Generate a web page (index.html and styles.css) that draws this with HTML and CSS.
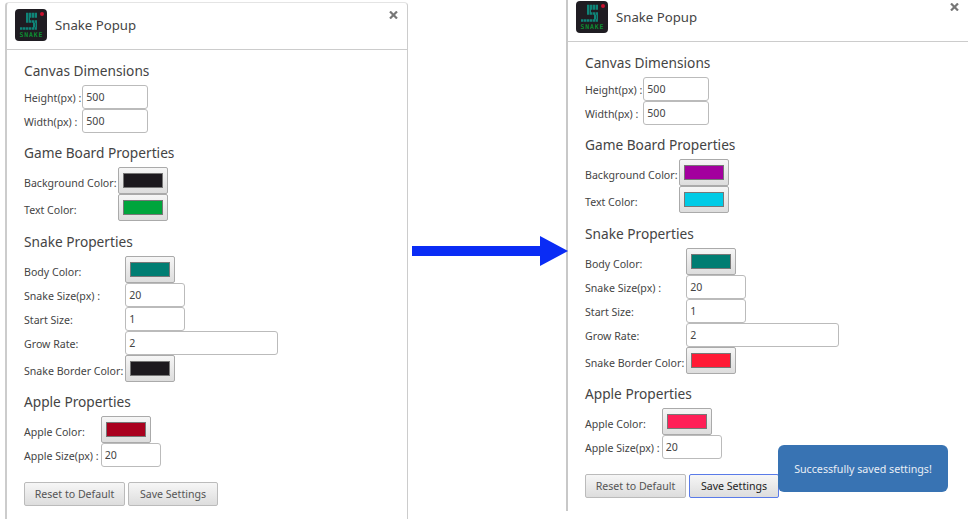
FILE: index.html
```html
<!DOCTYPE html>
<html lang="en">
<head>
    <meta charset="UTF-8">
    <meta name="viewport" content="width=device-width, initial-scale=1.0">
    <title>Snake Popup</title>
    <link rel="stylesheet" href="styles.css">
</head>
<body>
    <div class="panel panel-before">
        <div class="panel-header">
            <svg class="logo" width="32" height="32" viewBox="0 0 32 32">
                <rect width="32" height="32" rx="4" fill="#1f1c22"/>
                <path d="M11 5h11M11 7.500h11M11 10h4M11 12.500h11M18 15h4M18 17h4M5 19.500h17" stroke="#0f8478" stroke-width="2.500" stroke-dasharray="2.400 .5" fill="none"/>
                <circle cx="27" cy="5" r="2" fill="#c8102e"/>
                <text x="16" y="28" text-anchor="middle" textLength="23" class="logo-text">SNAKE</text>
            </svg>
            <span class="panel-title">Snake Popup</span>
            <svg class="close" width="9" height="8" viewBox="0 0 9 8"><path d="M1 .5l7 7M8 .5l-7 7" stroke="#777" stroke-width="2.200"/></svg>
        </div>
        <div class="panel-body">
            <h3>Canvas Dimensions</h3>
            <div class="fields">
                <label>Height(px) :</label><input class="num" value="500">
                <label>Width(px) :</label><input class="num" value="500">
            </div>
            <h3>Game Board Properties</h3>
            <div class="fields">
                <label>Background Color:</label><button class="swatch"><span style="background:#1c191e"></span></button>
                <label>Text Color:</label><button class="swatch"><span style="background:#00a53c"></span></button>
            </div>
            <h3 class="snake-title">Snake Properties</h3>
            <div class="fields">
                <label>Body Color:</label><button class="swatch"><span style="background:#007d72"></span></button>
                <label>Snake Size(px) :</label><input class="small" value="20">
                <label>Start Size:</label><input class="small" value="1">
                <label>Grow Rate:</label><input class="wide" value="2">
                <label>Snake Border Color:</label><button class="swatch"><span style="background:#1c191e"></span></button>
            </div>
            <h3>Apple Properties</h3>
            <div class="fields">
                <label>Apple Color:</label><button class="swatch"><span style="background:#a9001e"></span></button>
                <label>Apple Size(px) :</label><input class="small" value="20">
            </div>
            <div class="actions">
                <button class="btn btn-reset">Reset to Default</button>
                <button class="btn btn-save">Save Settings</button>
            </div>
        </div>
    </div>

    <div class="gutter">
        <svg class="arrow" width="156" height="30" viewBox="0 0 156 30">
            <path d="M0 10h128V0l28 15-28 15V20H0z" fill="#0a2cf5"/>
        </svg>
    </div>

    <div class="panel panel-after">
        <div class="panel-header">
            <svg class="logo" width="32" height="32" viewBox="0 0 32 32">
                <rect width="32" height="32" rx="4" fill="#1f1c22"/>
                <path d="M11 5h11M11 7.500h11M11 10h4M11 12.500h11M18 15h4M18 17h4M5 19.500h17" stroke="#0f8478" stroke-width="2.500" stroke-dasharray="2.400 .5" fill="none"/>
                <circle cx="27" cy="5" r="2" fill="#c8102e"/>
                <text x="16" y="28" text-anchor="middle" textLength="23" class="logo-text">SNAKE</text>
            </svg>
            <span class="panel-title">Snake Popup</span>
            <svg class="close" width="9" height="8" viewBox="0 0 9 8"><path d="M1 .5l7 7M8 .5l-7 7" stroke="#777" stroke-width="2.200"/></svg>
        </div>
        <div class="panel-body">
            <h3>Canvas Dimensions</h3>
            <div class="fields">
                <label>Height(px) :</label><input class="num" value="500">
                <label>Width(px) :</label><input class="num" value="500">
            </div>
            <h3>Game Board Properties</h3>
            <div class="fields">
                <label>Background Color:</label><button class="swatch"><span style="background:#a3009e"></span></button>
                <label>Text Color:</label><button class="swatch"><span style="background:#00cbe6"></span></button>
            </div>
            <h3 class="snake-title">Snake Properties</h3>
            <div class="fields">
                <label>Body Color:</label><button class="swatch"><span style="background:#007d72"></span></button>
                <label>Snake Size(px) :</label><input class="small" value="20">
                <label>Start Size:</label><input class="small" value="1">
                <label>Grow Rate:</label><input class="wide" value="2">
                <label>Snake Border Color:</label><button class="swatch"><span style="background:#ff1a35"></span></button>
            </div>
            <h3>Apple Properties</h3>
            <div class="fields">
                <label>Apple Color:</label><button class="swatch"><span style="background:#ff1f57"></span></button>
                <label>Apple Size(px) :</label><input class="small" value="20">
            </div>
            <div class="actions">
                <button class="btn btn-reset">Reset to Default</button>
                <button class="btn btn-save btn-focus">Save Settings</button>
            </div>
        </div>
        <div class="toast">Successfully saved settings!</div>
    </div>
</body>
</html>
```

FILE: styles.css
```css
html, body {
    height: 100%;
}

body {
    margin: 0;
    display: flex;
    align-items: flex-start;
    overflow: hidden;
    background: #fff;
    color: #444;
    font-family: "Noto Sans", "Open Sans", sans-serif;
    font-size: 10.6px;
}

.logo {
    flex: none;
}

.logo-text {
    font-family: "DejaVu Sans Mono", monospace;
    font-size: 6.5px;
    font-weight: bold;
    fill: #0c8f32;
}

.panel {
    position: relative;
    flex: none;
    width: 400px;
    background: #fff;
}

.panel-before {
    margin: 2px 0 0 5px;
    height: 516px;
    border-left: 2px solid #ccc;
    border-right: 1px solid #ccc;
    border-top: 1px solid #e4e4e4;
    border-radius: 4px 4px 0 0;
}

.panel-after {
    margin-top: -5px;
    height: 516px;
    border-left: 2px solid #c8c8c8;
}

.panel-header {
    box-sizing: border-box;
    display: flex;
    align-items: center;
    gap: 8px;
    height: 47px;
    padding: 0 0 2px 8px;
    border-bottom: 1px solid #ccc;
}

.panel-title {
    font-size: 13.2px;
}

.close {
    position: absolute;
    top: 8px;
    right: 9px;
}

.panel-body {
    padding: 12px 17px;
}

h3 {
    margin: 0;
    height: 23px;
    font-size: 13.7px;
    font-weight: 400;
    line-height: 18px;
}

h3:not(:first-child) {
    margin-top: 11px;
}

h3.snake-title {
    margin-top: 12px;
}

.fields {
    display: grid;
    grid-template-columns: max-content 1fr;
    align-items: center;
    column-gap: 2px;
}

.fields label {
    padding-top: 2px;
}

.fields label:has(+ .swatch) {
    padding-top: 4px;
}

input {
    box-sizing: border-box;
    height: 24px;
    padding: 0 3px;
    border: 1px solid #bbb;
    border-radius: 3px;
    font: 10.6px "Noto Sans", sans-serif;
    color: #444;
    justify-self: start;
}

.num {
    width: 66px;
    margin-left: -1px;
}

.small {
    width: 60px;
}

.wide {
    width: 153px;
}

.swatch {
    box-sizing: border-box;
    display: flex;
    width: 50px;
    height: 27px;
    padding: 5px 4px;
    border: 1px solid #aaa;
    border-radius: 2px;
    background: linear-gradient(#f6f6f6, #ddd);
    justify-self: start;
}

.swatch span {
    flex: 1;
    border: 1px solid #777;
}

.actions {
    display: flex;
    gap: 3px;
    margin-top: 15px;
}

.btn {
    height: 24px;
    padding: 0;
    border: 1px solid #bbb;
    border-radius: 2px;
    background: linear-gradient(#f6f6f6, #ddd);
    font: 10.6px "Noto Sans", sans-serif;
    color: #555;
}

.btn-reset {
    width: 101px;
}

.btn-save {
    width: 90px;
}

.btn-focus {
    border-color: #5a7be8;
    color: #222;
}

.gutter {
    flex: none;
    width: 158px;
    padding-top: 236px;
}

.arrow {
    display: block;
    margin-left: 4px;
    overflow: visible;
    position: relative;
    z-index: 1;
}

.toast {
    position: absolute;
    left: 210px;
    top: 450px;
    display: flex;
    align-items: center;
    justify-content: center;
    width: 170px;
    height: 47px;
    border-radius: 6px;
    background: #3873b3;
    color: #e8eef5;
    font-size: 10.7px;
}
```
